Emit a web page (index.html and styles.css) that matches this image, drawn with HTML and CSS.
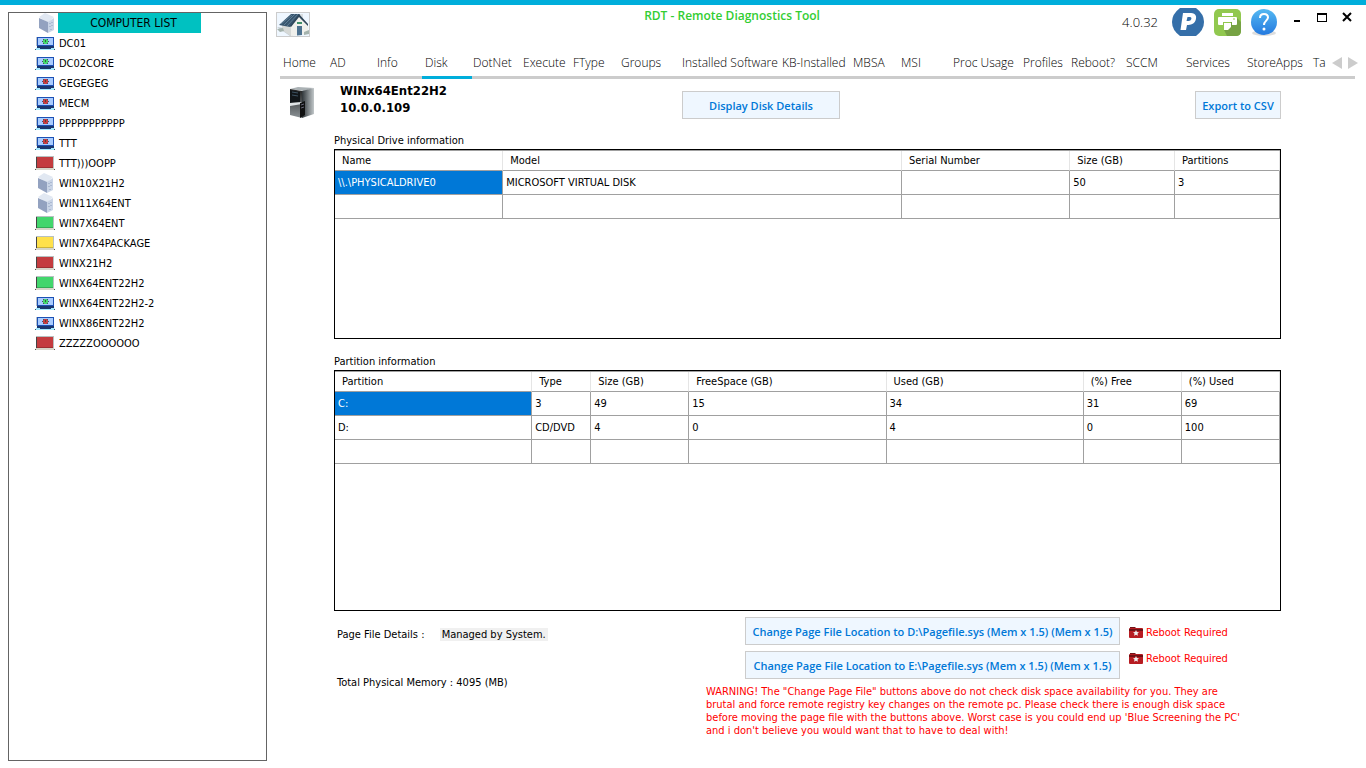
FILE: index.html
```html
<!DOCTYPE html>
<html lang="en">
<head>
    <meta charset="UTF-8">
    <meta name="viewport" content="width=device-width, initial-scale=1.0">
    <title>RDT - Remote Diagnostics Tool</title>
    <link rel="stylesheet" href="styles.css">
</head>
<body>
    <!-- Shared icons -->
    <svg class="symbols" aria-hidden="true">
        <symbol id="server" viewBox="0 0 20 20">
            <path d="M3 4 9 0l9 4-6 6z" fill="#e1e8f2"/>
            <path d="M3 5 12 9V20L3 15z" fill="#93a2c0"/>
            <path d="M12 9 18 5V17L12 20z" fill="#c9d4e6"/>
            <path d="M14 10v1M16 9v1M14 13v1M16 12v1M15 16v1" stroke="#8ea0bf"/>
        </symbol>
        <symbol id="laptop" viewBox="0 -1 20 14">
            <path d="M1 0h1v9H1z" fill="#b9c1c9"/>
            <path d="M2 0h17v9H2z" fill="#1c51b5"/>
            <path d="M3 1h15v7H3z" fill="#a9ccff"/>
            <path d="M2 10h17l1 3H0z" fill="#a5eaff"/>
            <path d="M2 9h17v2H2zM5 11h11v1H5z" fill="#1b376f"/>
            <path d="M0 12h1v1H0zM19 12h1v1h-1z" fill="#3c536b"/>
            <path d="M8 3h5v3H8zM9 2h3v5H9z" fill="currentColor"/>
            <path d="M8 2h1v1H8zM12 2h1v1h-1zM8 6h1v1H8zM12 6h1v1h-1zM7 4h1v1H7zM13 4h1v1h-1z" fill="#42506a"/>
            <path d="M10 3h1v2h-1z" fill="#343" opacity=".8"/>
        </symbol>
        <symbol id="screen" viewBox="0 -1 20 14">
            <path d="M1 -1h18v12H1z" fill="#b7c1c1"/>
            <path d="M1 0h1v11H1z" fill="#444"/>
            <path d="M2 0h16v11H2z" fill="currentColor"/>
            <path d="M2 10h16v1H2z" fill="#000" opacity=".2"/>
            <path d="M1 11h18l1 2H0z" fill="#d6d6c9"/>
            <path d="M0 12h1v1H0zM19 12h1v1h-1z" fill="#555"/>
        </symbol>
        <symbol id="toolbox" viewBox="0 0 14 12">
            <path d="M1 2V1h5l1 1z" fill="#701418"/>
            <rect y="2" width="14" height="10" rx="1" fill="#b71c22"/>
            <path d="M0 3h14v2H0z" fill="#6f1115"/>
            <path d="M7 4l.9 1.900 2.100.3-1.500 1.400.4 2.100L7 8.700l-1.900 1 .4-2.100L4 6.200l2.100-.3z" fill="#eee"/>
        </symbol>
    </svg>

    <div class="window">
        <aside class="sidebar">
            <h2 class="list-title"><svg><use href="#server"/></svg><span>COMPUTER LIST</span></h2>
            <ul class="computers">
                <li><a href="#"><svg class="green"><use href="#laptop"/></svg>DC01</a></li>
                <li><a href="#"><svg class="green"><use href="#laptop"/></svg>DC02CORE</a></li>
                <li><a href="#"><svg class="red"><use href="#laptop"/></svg>GEGEGEG</a></li>
                <li><a href="#"><svg class="red"><use href="#laptop"/></svg>MECM</a></li>
                <li><a href="#"><svg class="red"><use href="#laptop"/></svg>PPPPPPPPPPP</a></li>
                <li><a href="#"><svg class="red"><use href="#laptop"/></svg>TTT</a></li>
                <li><a href="#"><svg class="red"><use href="#screen"/></svg>TTT)))OOPP</a></li>
                <li><a href="#"><svg class="tower"><use href="#server"/></svg>WIN10X21H2</a></li>
                <li><a href="#"><svg class="tower"><use href="#server"/></svg>WIN11X64ENT</a></li>
                <li><a href="#"><svg class="green"><use href="#screen"/></svg>WIN7X64ENT</a></li>
                <li><a href="#"><svg class="yellow"><use href="#screen"/></svg>WIN7X64PACKAGE</a></li>
                <li><a href="#"><svg class="red"><use href="#screen"/></svg>WINX21H2</a></li>
                <li><a href="#"><svg class="green"><use href="#screen"/></svg>WINX64ENT22H2</a></li>
                <li><a href="#"><svg class="green"><use href="#laptop"/></svg>WINX64ENT22H2-2</a></li>
                <li><a href="#"><svg class="red"><use href="#laptop"/></svg>WINX86ENT22H2</a></li>
                <li><a href="#"><svg class="red"><use href="#screen"/></svg>ZZZZZOOOOOO</a></li>
            </ul>
        </aside>

        <main class="main">
            <header class="header">
                <button class="home" aria-label="Home">
                    <svg viewBox="0 0 32 23">
                        <path d="M0 14l8 1 8 8H13z" fill="#c3cbd0"/>
                        <path d="M23 1h3v6h-3z" fill="#d9dde0"/>
                        <path d="M12 12 23 2l8 10v9l-17 2z" fill="#f0f0ec"/>
                        <path d="M5 11v6l9 6V12z" fill="#d6d9d7"/>
                        <path d="M2 12 14 1l9 0-10 13z" fill="#39566f"/>
                        <path d="M4 11 15 2M7 12 18 1M10 13 21 1" stroke="#5e7d94" fill="none"/>
                        <path d="M22 1l9 10v2L22 4l-8 10-1-1z" fill="#2f465a"/>
                        <path d="M20 13h5v9l-5 .5z" fill="#4d7290"/>
                        <path d="M20 9h5v2h-5z" fill="#3f8f6a"/>
                        <path d="M0 16l6-1 1 3-4 1zM27 19l5-2v4l-5 1z" fill="#a5b3ad"/>
                    </svg>
                </button>
                <h1>RDT - Remote Diagnostics Tool</h1>
                <div class="tools">
                    <span class="version">4.0.32</span>
                    <button aria-label="PayPal">
                        <svg width="32" height="28" viewBox="0 0 32 28">
                            <path d="M8 0h16q8 6 8 14t-8 14H8q-8-6-8-14T8 0z" fill="#356fa9"/>
                            <path d="M11 5h8c5 0 6 4 4.500 7.500C22 16 19 17 15 17l-1 5H8.500z" fill="#fff"/>
                            <path d="M15.500 9h2.500c2.500 0 1.500 4-1.500 4h-2z" fill="#356fa9"/>
                        </svg>
                    </button>
                    <button aria-label="Print">
                        <svg width="27" height="27" viewBox="0 0 27 27">
                            <rect width="27" height="27" rx="5" fill="#91c84f"/>
                            <path d="M22 8l5 5v9q0 5-5 5h-9l-3-6z" fill="#76a243"/>
                            <path d="M8 4h11v3H8z" fill="#fff"/>
                            <path d="M5 8h17q1 0 1 1v6q0 1-1 1h-4v-3H9v3H5q-1 0-1-1V9q0-1 1-1z" fill="#fff"/>
                            <path d="M10 14h7v4l-3 3h-4z" fill="#fff"/>
                            <path d="M19 10h2" stroke="#91c84f" fill="none"/>
                        </svg>
                    </button>
                    <button aria-label="Help">
                        <svg width="26" height="27" viewBox="0 0 26 27">
                            <defs>
                                <linearGradient id="help-fill" x1="0" y1="0" x2="0" y2="1">
                                    <stop offset="0" stop-color="#55b9f2"/>
                                    <stop offset="1" stop-color="#2479df"/>
                                </linearGradient>
                            </defs>
                            <ellipse cx="13" cy="24" rx="12" ry="3" fill="#ddd"/>
                            <circle cx="13" cy="13" r="13" fill="url(#help-fill)"/>
                            <path d="M9 9q0-4 4-4t4 3.500c0 3-4 3.500-4 7.500" fill="none" stroke="#fff" stroke-width="2"/>
                            <circle cx="13" cy="20" r="1.500" fill="#fff"/>
                        </svg>
                    </button>
                </div>
                <div class="caption">
                    <button aria-label="Minimize"><svg viewBox="0 0 12 12"><path d="M3 8h6v2H3z"/></svg></button>
                    <button aria-label="Maximize"><svg viewBox="0 0 12 12"><path d="M1 1h10v9H1zM2 3v6h8V3z" fill-rule="evenodd"/></svg></button>
                    <button aria-label="Close"><svg viewBox="0 0 12 12"><path d="M2 1l8 8M10 1l-8 8" stroke="#000" stroke-width="2"/></svg></button>
                </div>
            </header>

            <nav class="tabs">
                <div class="tab-list">
                    <button>Home</button>
                    <button>AD</button>
                    <button>Info</button>
                    <button class="active">Disk</button>
                    <button>DotNet</button>
                    <button>Execute</button>
                    <button>FType</button>
                    <button>Groups</button>
                    <button>Installed Software</button>
                    <button>KB-Installed</button>
                    <button>MBSA</button>
                    <button>MSI</button>
                    <button>Proc Usage</button>
                    <button>Profiles</button>
                    <button>Reboot?</button>
                    <button>SCCM</button>
                    <button>Services</button>
                    <button>StoreApps</button>
                    <button>Ta</button>
                </div>
                <button class="scroll" aria-label="Scroll left"><svg viewBox="0 0 10 12"><path d="M10 0v12L0 6z"/></svg></button>
                <button class="scroll" aria-label="Scroll right"><svg viewBox="0 0 10 12"><path d="M0 0v12l10-6z"/></svg></button>
            </nav>

            <section class="content">
                <div class="toolbar">
                    <svg class="pc" viewBox="0 0 26 32">
                        <defs>
                            <linearGradient id="pc-side">
                                <stop offset="0" stop-color="#30363a"/>
                                <stop offset="1" stop-color="#c2c8ca"/>
                            </linearGradient>
                            <linearGradient id="pc-front" x1="0" y1="0" x2="0" y2="1">
                                <stop offset="0" stop-color="#222"/>
                                <stop offset="1" stop-color="#8b9296"/>
                            </linearGradient>
                        </defs>
                        <path d="M1 2 9 0l16 1-10 3z" fill="#aab1b4"/>
                        <path d="M13 4 25 1v26l-12 4z" fill="url(#pc-side)"/>
                        <path d="M1 2l12 2v27L1 28z" fill="url(#pc-front)"/>
                        <path d="M1 3l10 2v10L1 16z" fill="#111518"/>
                        <path d="M1 16l12-1v2L1 19z" fill="#e0e4e6"/>
                        <path d="M3 5l6 1M3 8l6 1" stroke="#3e5363"/>
                        <path d="M11 16l5-2v14l-5 3z" fill="#111"/>
                        <path d="M12 18l3-1M12 21l3-1" stroke="#667"/>
                    </svg>
                    <div class="host">WINx64Ent22H2<br>10.0.0.109</div>
                    <button class="btn display">Display Disk Details</button>
                    <button class="btn export">Export to CSV</button>
                </div>

                <h3>Physical Drive information</h3>
                <div class="grid-box drives">
                    <table>
                        <colgroup>
                            <col class="w18"><col class="w42"><col class="w18"><col class="w11"><col class="w11">
                        </colgroup>
                        <thead>
                            <tr><th>Name</th><th>Model</th><th>Serial Number</th><th>Size (GB)</th><th>Partitions</th></tr>
                        </thead>
                        <tbody>
                            <tr><td class="selected">\\.\PHYSICALDRIVE0</td><td>MICROSOFT VIRTUAL DISK</td><td></td><td>50</td><td>3</td></tr>
                            <tr><td></td><td></td><td></td><td></td><td></td></tr>
                        </tbody>
                    </table>
                </div>

                <h3>Partition information</h3>
                <div class="grid-box partitions">
                    <table>
                        <colgroup>
                            <col class="w21"><col class="w6"><col class="w10"><col class="w21"><col class="w21"><col class="w10"><col class="w10">
                        </colgroup>
                        <thead>
                            <tr><th>Partition</th><th>Type</th><th>Size (GB)</th><th>FreeSpace (GB)</th><th>Used (GB)</th><th>(%) Free</th><th>(%) Used</th></tr>
                        </thead>
                        <tbody>
                            <tr><td class="selected">C:</td><td>3</td><td>49</td><td>15</td><td>34</td><td>31</td><td>69</td></tr>
                            <tr><td>D:</td><td>CD/DVD</td><td>4</td><td>0</td><td>4</td><td>0</td><td>100</td></tr>
                            <tr><td></td><td></td><td></td><td></td><td></td><td></td><td></td></tr>
                        </tbody>
                    </table>
                </div>

                <div class="footer">
                    <div class="memory">
                        <p>Page File Details : <span class="managed">Managed by System.</span></p>
                        <p>Total Physical Memory : 4095 (MB)</p>
                    </div>
                    <div class="pagefile">
                        <div class="actions">
                            <div class="action-buttons">
                                <button class="btn">Change Page File Location to D:\Pagefile.sys (Mem x 1.5) (Mem x 1.5)</button>
                                <button class="btn">Change Page File Location to E:\Pagefile.sys (Mem x 1.5) (Mem x 1.5)</button>
                            </div>
                            <div class="reboot">
                                <span><svg><use href="#toolbox"/></svg>Reboot Required</span>
                                <span><svg><use href="#toolbox"/></svg>Reboot Required</span>
                            </div>
                        </div>
                        <p class="warning">
                            WARNING! The "Change Page File" buttons above do not check disk space availability for you. They are<br>
                            brutal and force remote registry key changes on the remote pc. Please check there is enough disk space<br>
                            before moving the page file with the buttons above. Worst case is you could end up 'Blue Screening the PC'<br>
                            and i don't believe you would want that to have to deal with!
                        </p>
                    </div>
                </div>
            </section>
        </main>
    </div>
</body>
</html>
```
FILE: styles.css
```css
* {
    box-sizing: border-box;
}

body {
    margin: 0;
    background: #fff;
    color: #000;
    font: 11px/13px "DejaVu Sans Condensed", "Noto Sans", sans-serif;
}

h1, h2, h3, p, ul {
    margin: 0;
    padding: 0;
    font-weight: normal;
}

button {
    margin: 0;
    padding: 0;
    border: 0;
    background: none;
    color: inherit;
    font: inherit;
    cursor: pointer;
}

svg {
    display: block;
    flex: none;
}

.symbols {
    position: absolute;
    width: 0;
    height: 0;
}

.window {
    display: flex;
    gap: 9px;
    min-height: 100vh;
    padding: 7px 11px 7px 8px;
    border-top: 5px solid #00aedb;
}

/* Computer list */
.sidebar {
    flex: none;
    width: 259px;
    border: 1px solid #646464;
}

.list-title {
    display: flex;
    height: 20px;
    padding-left: 27px;
    font-size: 12px;
    line-height: 20px;
}

.list-title svg {
    width: 20px;
    height: 20px;
    margin-right: 2px;
}

.list-title span {
    width: 143px;
    padding-left: 8px;
    background: #00c1c1;
    text-align: center;
}

.computers {
    list-style: none;
}

.computers a {
    display: flex;
    align-items: center;
    gap: 4px;
    height: 20px;
    padding-left: 26px;
    color: #000;
    text-decoration: none;
}

.computers svg {
    width: 20px;
    height: 14px;
}

.computers .tower {
    height: 20px;
}

.green { color: #42d66c; }
.red { color: #c43c3f; }
.yellow { color: #ffe14b; }

/* Header */
.main {
    display: flex;
    flex: 1;
    flex-direction: column;
    min-width: 0;
}

.header {
    display: grid;
    grid-template-columns: 34px 1fr auto auto;
    align-items: start;
    height: 38px;
}

.home {
    width: 34px;
    height: 25px;
    border: 1px solid #ccc;
    background: #eff7ff;
}

h1 {
    padding-left: 32px;
    color: #32cd32;
    font: 600 12px/8px "Open Sans", sans-serif;
    text-align: center;
}

.tools {
    display: flex;
    align-items: center;
    justify-content: flex-end;
    gap: 10px;
    height: 20px;
}

.version {
    margin-right: 4px;
    font: 300 13px/20px "Open Sans", sans-serif;
}

.caption {
    display: flex;
    gap: 13px;
    padding: 0 2px 0 14px;
}

.caption svg {
    width: 12px;
    height: 12px;
}

.caption button {
    height: 8px;
}

/* Tabs */
.tabs {
    display: flex;
    margin-left: 4px;
    padding-right: 1px;
    height: 29px;
    border-bottom: 3px solid #ccc;
}

.tab-list {
    display: grid;
    flex: 1;
    grid-template-columns: 47px 47px 48px 48px 50px 50px 48px 61px 100px 71px 48px 52px 70px 48px 55px 60px 61px 66px 1fr;
    height: 29px;
}

.tab-list button {
    padding: 0 0 3px 3px;
    font: 300 12px/26px "Open Sans", sans-serif;
    text-align: left;
    white-space: nowrap;
}

.tab-list .active {
    width: 50px;
    padding-bottom: 0;
    border-bottom: 3px solid #00aedb;
}

.scroll {
    width: 10px;
    height: 26px;
    margin: 0 0 0 6px;
}

.scroll svg {
    width: 10px;
    height: 12px;
    fill: #ccc;
}

/* Disk page */
.content {
    display: flex;
    flex: 1;
    flex-direction: column;
    padding: 8px 74px 0 58px;
}

.toolbar {
    display: flex;
    height: 47px;
}

.pc {
    width: 26px;
    height: 32px;
    margin-left: -45px;
}

.host {
    width: 342px;
    margin: -5px 0 0 25px;
    font-size: 13px;
    font-weight: bold;
    line-height: 17px;
}

.btn {
    height: 28px;
    padding-top: 1px;
    border: 1px solid #ccc;
    background: #eff7ff;
    color: #0078d7;
    font: 600 11px/24px "Open Sans", sans-serif;
    white-space: nowrap;
}

.display,
.export {
    margin-top: 4px;
}

.display {
    width: 158px;
}

.export {
    width: 86px;
    margin-left: auto;
}

h3 {
    margin-bottom: 2px;
    font-size: 11px;
    line-height: 13px;
}

.grid-box {
    border: 1px solid #000;
}

.drives {
    flex: 190;
    margin-bottom: 16px;
}

.partitions {
    flex: 241;
}

table {
    width: 100%;
    border-collapse: separate;
    border-spacing: 0;
    border-top: 1px solid #a0a0a0;
    table-layout: fixed;
}

th,
td {
    overflow: hidden;
    border-right: 1px solid #a0a0a0;
    border-bottom: 1px solid #a0a0a0;
    font-weight: normal;
    text-align: left;
    white-space: nowrap;
}

th {
    height: 20px;
    padding: 0 7px;
    border-right-color: #e5e5e5;
}

td {
    height: 24px;
    padding: 0 3px;
}

.selected {
    background: #0078d7;
    color: #fff;
}

.w6 { width: 6.25%; }
.w10 { width: 10.4%; }
.w11 { width: 11.1%; }
.w18 { width: 17.8%; }
.w21 { width: 20.9%; }
.w42 { width: 42.2%; }

/* Page file */
.footer {
    display: flex;
    justify-content: space-between;
    height: 150px;
    padding-top: 6px;
}

.memory {
    padding: 11px 0 0 3px;
}

.memory p {
    margin-bottom: 35px;
}

.managed {
    margin-left: 12px;
    padding: 0 2px;
    background: #f0f0f0;
}

.pagefile {
    width: 575px;
}

.actions {
    display: flex;
    gap: 9px;
    padding-left: 39px;
}

.action-buttons {
    display: flex;
    flex-direction: column;
    gap: 6px;
    width: 375px;
}

.reboot {
    display: flex;
    flex-direction: column;
    gap: 13px;
    padding-top: 9px;
    color: #f00;
}

.reboot span {
    display: flex;
    gap: 3px;
    white-space: nowrap;
}

.reboot svg {
    width: 14px;
    height: 12px;
}

.warning {
    margin-top: 6px;
    color: #f00;
    white-space: nowrap;
}
```
